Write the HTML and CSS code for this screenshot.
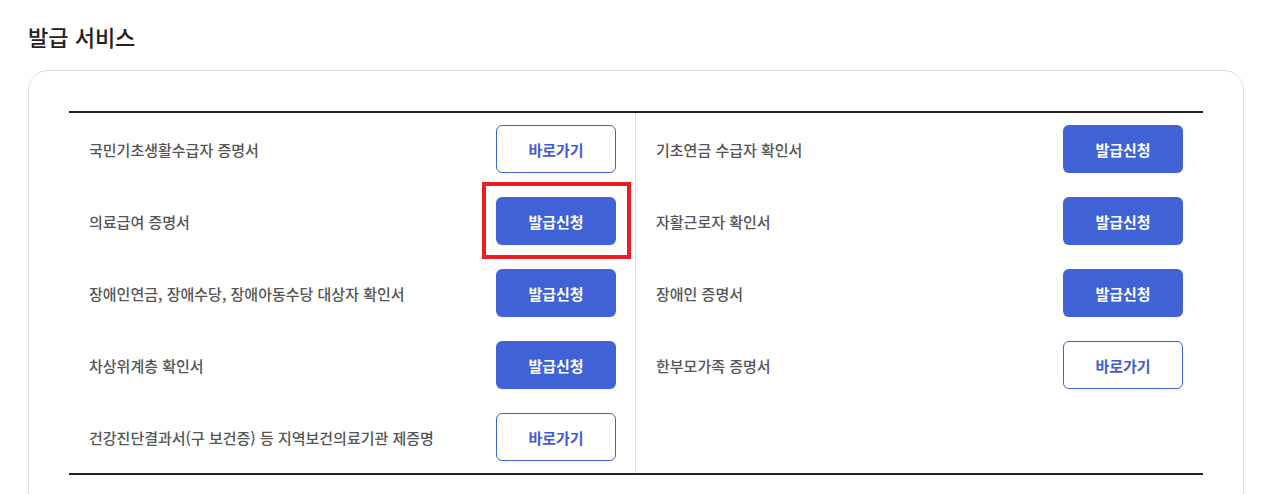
FILE: index.html
```html
<!DOCTYPE html>
<html lang="ko">
<head>
  <meta charset="UTF-8">
  <title>발급 서비스</title>
  <link rel="stylesheet" href="styles.css">
</head>
<body>

  <h2 class="section-title">발급 서비스</h2>

  <div class="card">
    <div class="service-grid">
      <div class="service-item left">
        <span class="service-name">국민기초생활수급자 증명서</span>
        <a class="btn btn-outline" href="#">바로가기</a>
      </div>
      <div class="service-item">
        <span class="service-name">기초연금 수급자 확인서</span>
        <a class="btn btn-fill" href="#">발급신청</a>
      </div>

      <div class="service-item left">
        <span class="service-name">의료급여 증명서</span>
        <span class="highlight">
          <a class="btn btn-fill" href="#">발급신청</a>
        </span>
      </div>
      <div class="service-item">
        <span class="service-name">자활근로자 확인서</span>
        <a class="btn btn-fill" href="#">발급신청</a>
      </div>

      <div class="service-item left">
        <span class="service-name">장애인연금, 장애수당, 장애아동수당 대상자 확인서</span>
        <a class="btn btn-fill" href="#">발급신청</a>
      </div>
      <div class="service-item">
        <span class="service-name">장애인 증명서</span>
        <a class="btn btn-fill" href="#">발급신청</a>
      </div>

      <div class="service-item left">
        <span class="service-name">차상위계층 확인서</span>
        <a class="btn btn-fill" href="#">발급신청</a>
      </div>
      <div class="service-item">
        <span class="service-name">한부모가족 증명서</span>
        <a class="btn btn-outline" href="#">바로가기</a>
      </div>

      <div class="service-item left">
        <span class="service-name">건강진단결과서(구 보건증) 등 지역보건의료기관 제증명</span>
        <a class="btn btn-outline" href="#">바로가기</a>
      </div>
      <div class="service-item"></div>
    </div>
  </div>

</body>
</html>
```

FILE: styles.css
```css
body {
  margin: 0;
  padding: 0 18px 0 28px;
  font-family: "Noto Sans CJK KR", "Noto Sans", sans-serif;
  background: #fff;
  color: #222;
}

.section-title {
  margin: 0;
  padding-top: 18px;
  height: 52px;
  font-size: 22px;
  font-weight: 500;
  line-height: 36px;
  color: #222;
}

.card {
  border: 1px solid #dedede;
  border-radius: 20px;
  padding: 40px 40px 40px 40px;
  height: 500px;
}

.service-grid {
  display: grid;
  grid-template-columns: 1fr 1fr;
  border-top: 2px solid #222;
  border-bottom: 2px solid #222;
}

.service-item {
  display: flex;
  align-items: center;
  justify-content: space-between;
  height: 72px;
  padding: 0 20px;
}

.service-item.left {
  border-right: 1px solid #e0e0e0;
  padding-right: 19px;
}

.service-name {
  font-size: 15px;
  font-weight: 500;
  color: #555;
}

.btn {
  display: flex;
  align-items: center;
  justify-content: center;
  box-sizing: border-box;
  width: 120px;
  height: 48px;
  border-radius: 6px;
  font-size: 15px;
  font-weight: 700;
  text-decoration: none;
}

.btn-fill {
  background: #3f62d7;
  color: #fff;
}

.btn-outline {
  border: 1px solid #3f62d7;
  background: #fff;
  color: #3f5cd6;
}

.highlight {
  position: relative;
  display: block;
}

.highlight::after {
  content: "";
  position: absolute;
  top: -15px;
  left: -14px;
  right: -15px;
  bottom: -14px;
  border: 4px solid #ec1c24;
}
```
